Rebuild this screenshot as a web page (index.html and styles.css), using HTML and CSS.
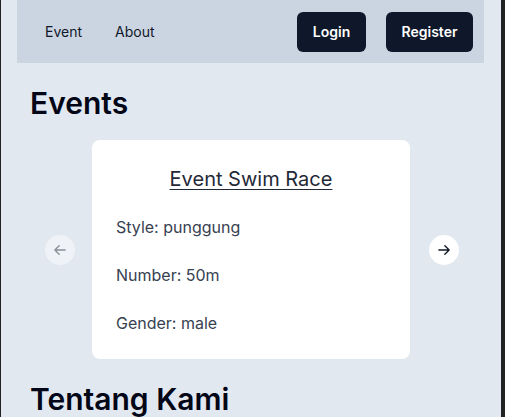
FILE: index.html
```html
<!DOCTYPE html>
<html>
<head>
<meta charset="utf-8">
<link rel="stylesheet" href="styles.css">
</head>
<body>
<div class="page">
  <nav class="navbar">
    <div class="links">
      <a class="link">Event</a>
      <a class="link">About</a>
    </div>
    <div class="actions">
      <button class="btn btn-login">Login</button>
      <button class="btn btn-register">Register</button>
    </div>
  </nav>
  <h1 class="heading heading-events">Events</h1>
  <div class="carousel">
    <button class="arrow arrow-prev">
      <svg width="12" height="12" viewBox="0 0 14 14" fill="none" stroke="currentColor" stroke-width="1.6" stroke-linecap="round" stroke-linejoin="round"><path d="M13 7H1M6 2L1 7l5 5"/></svg>
    </button>
    <div class="card">
      <h2 class="card-title">Event Swim Race</h2>
      <p class="card-line">Style: punggung</p>
      <p class="card-line">Number: 50m</p>
      <p class="card-line">Gender: male</p>
    </div>
    <button class="arrow arrow-next">
      <svg width="12" height="12" viewBox="0 0 14 14" fill="none" stroke="currentColor" stroke-width="1.6" stroke-linecap="round" stroke-linejoin="round"><path d="M1 7h12M8 2l5 5-5 5"/></svg>
    </button>
  </div>
  <h1 class="heading heading-about">Tentang Kami</h1>
</div>
</body>
</html>
```
FILE: styles.css
```css
html, body {
  margin: 0;
  padding: 0;
}
body {
  background: #202322;
  font-family: Inter, "Noto Sans", sans-serif;
  height: 417px;
  overflow: hidden;
}
.page {
  margin-left: 1px;
  width: 500px;
  height: 417px;
  background: #e2e8f0;
  padding: 0 16px;
  box-sizing: border-box;
  overflow: hidden;
}
.navbar {
  height: 63px;
  width: 467px;
  background: #cbd5e1;
  display: flex;
  align-items: center;
  justify-content: space-between;
  padding: 0 11px 0 28px;
  box-sizing: border-box;
}
.links {
  display: flex;
  gap: 33px;
}
.link {
  font-size: 14px;
  color: #0f172a;
}
.actions {
  display: flex;
  gap: 20px;
  align-items: center;
}
.btn {
  height: 40px;
  border: none;
  border-radius: 6px;
  background: #0f172a;
  color: #fff;
  font-family: Inter, sans-serif;
  font-size: 14px;
  font-weight: 600;
  padding: 0;
}
.btn-login { width: 69px; }
.btn-register { width: 87px; }
.heading {
  margin: 0;
  font-size: 30px;
  font-weight: 600;
  color: #020617;
  padding-left: 13px;
  line-height: 36px;
}
.heading-events {
  margin-top: 22px;
}
.carousel {
  display: flex;
  align-items: center;
  margin-top: 19px;
  height: 219px;
}
.arrow {
  flex: none;
  width: 30px;
  height: 30px;
  border-radius: 50%;
  border: none;
  padding: 0;
  display: flex;
  align-items: center;
  justify-content: center;
}
.arrow-prev {
  margin-left: 28px;
  background: rgba(255,255,255,0.45);
  color: #8a8f98;
}
.arrow-next {
  margin-left: 19px;
  background: #fff;
  color: #111827;
}
.card {
  flex: none;
  margin-left: 17px;
  width: 318px;
  height: 219px;
  background: #fff;
  border-radius: 8px;
  box-sizing: border-box;
  padding: 25px 24px 0 24px;
}
.card-title {
  margin: 0;
  text-align: center;
  font-size: 20px;
  font-weight: 400;
  color: #1f2937;
  text-decoration: underline;
  text-decoration-thickness: 1px;
  text-underline-offset: 3px;
  line-height: 28px;
}
.card-line {
  margin: 24px 0 0 0;
  font-size: 16px;
  line-height: 24px;
  color: #374151;
}
.card-title + .card-line {
  margin-top: 22px;
}
.heading-about {
  margin-top: 22px;
}
```
